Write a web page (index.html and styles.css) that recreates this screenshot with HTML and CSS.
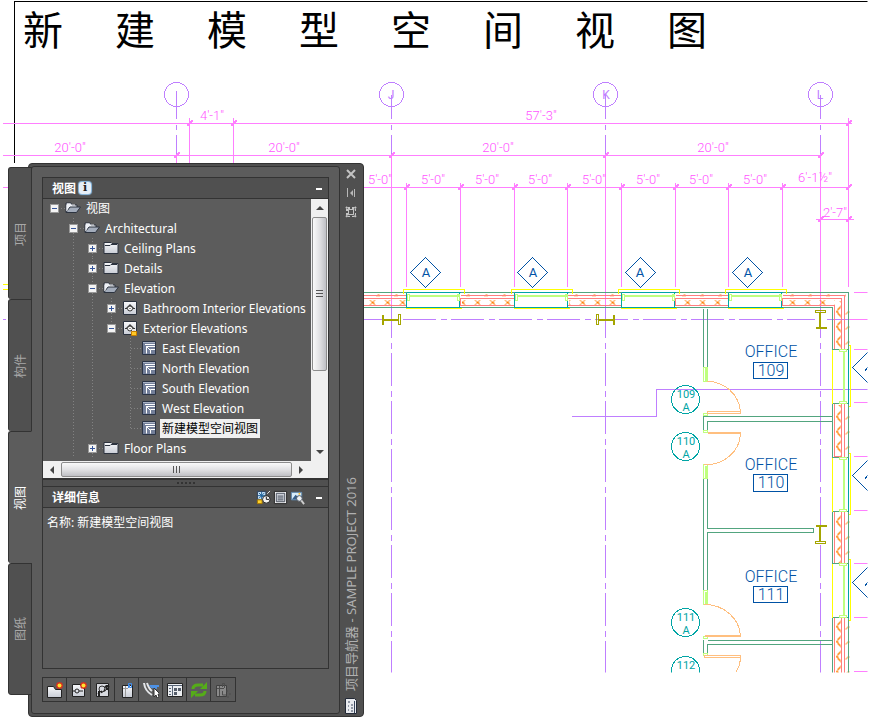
FILE: index.html
```html
<!DOCTYPE html>
<html lang="zh-CN">
<head>
    <meta charset="UTF-8">
    <meta name="viewport" content="width=device-width, initial-scale=1.0">
    <title>项目导航器 - SAMPLE PROJECT 2016</title>
    <link rel="stylesheet" href="styles.css">
</head>
<body>
    <div class="workspace">
        <!-- Floor plan, one unit = one pixel -->
        <svg class="drawing" aria-label="Floor plan">
            <defs>
                <clipPath id="sheet"><rect x="0" y="0" width="867" height="672"/></clipPath>
                <g id="tick"><path d="M-3 3L3 -3M-3 2L2 -3M-2 3L3 -2M-3 1H0V3"/></g>
                <g id="window">
                    <path class="yellow" d="M-3 1V-3H58V1M-1 16H55"/>
                    <path class="teal" d="M0 0H54M0 15H54M0 0V15M53 0V15"/>
                    <path class="lime" d="M2 3H52M2 4H52M1 2H3V8H1ZM51 2H53V8H51Z"/>
                </g>
                <g id="side-window">
                    <path class="yellow" d="M0 0V54M16 -4H18V57H16"/>
                    <path class="green" d="M0 0H16M0 54H16"/>
                    <path class="teal" d="M16 0V54"/>
                    <path class="lime" d="M11 2V52M12 2V52M7 0H14V2H7ZM7 52H14V54H7Z"/>
                </g>
                <g id="mark"><path class="blue" d="M0 -15L15 0L0 15L-15 0Z"/></g>
                <pattern id="batt" x="365" y="299" width="15" height="6" patternUnits="userSpaceOnUse">
                    <path class="orange" d="M4 6L10 0M10 6L4 0M6 3H9"/>
                </pattern>
                <pattern id="brick" x="368" y="293" width="18" height="3" patternUnits="userSpaceOnUse">
                    <path class="orange" d="M8 3L11 0"/>
                </pattern>
                <pattern id="side-batt" x="835" y="304" width="14" height="15" patternUnits="userSpaceOnUse">
                    <path class="orange" d="M6 1L1 7L6 13M0 7H3M10 10L13 7"/>
                </pattern>
            </defs>

            <g clip-path="url(#sheet)" transform="translate(0.5 0.5)">
                <path class="black" d="M14 162V1H880"/>

                <!-- Dimension chains -->
                <g class="pink">
                    <path d="M2 123H851M2 155H820M2 187H8M363 187H848M815 219H853"/>
                    <path d="M189 117V163M233 117V163M848 117V286M176 155V163"/>
                    <path d="M391 155V316M605 155V316M820 155V310"/>
                    <path d="M406 182V286M460 182V286M514 182V286M567 182V286M621 182V286M675 182V286M728 182V286M782 182V286"/>
                    <path d="M853 292H867M848 319H867M853 349H867M853 402H867M853 456H867M853 510H867M853 563H867M853 617H867M853 671H867"/>
                    <use href="#tick" x="189" y="123"/><use href="#tick" x="233" y="123"/><use href="#tick" x="848" y="123"/>
                    <use href="#tick" x="176" y="155"/><use href="#tick" x="391" y="155"/><use href="#tick" x="605" y="155"/><use href="#tick" x="820" y="155"/>
                    <use href="#tick" x="406" y="187"/><use href="#tick" x="460" y="187"/><use href="#tick" x="514" y="187"/><use href="#tick" x="567" y="187"/>
                    <use href="#tick" x="621" y="187"/><use href="#tick" x="675" y="187"/><use href="#tick" x="728" y="187"/><use href="#tick" x="782" y="187"/><use href="#tick" x="848" y="187"/>
                    <use href="#tick" x="820" y="219"/><use href="#tick" x="848" y="219"/>
                </g>
                <path class="yellow" d="M2 284H8M2 289H8"/>

                <!-- Column grid -->
                <g class="violet">
                    <circle cx="176" cy="94" r="12"/><circle cx="391" cy="94" r="12"/><circle cx="605" cy="94" r="12"/><circle cx="820" cy="94" r="12"/>
                    <path d="M176 90V118M176 124V129M176 134V153M391 94V118M391 124V129M391 134V153M605 94V118M605 124V129M605 134V153M820 94V118M820 124V129M820 134V153"/>
                    <path class="dashdot" d="M391 304V672M605 304V672M820 304V672M354 319H814M826 319H848"/>
                    <path d="M2 319H5M571 416H656V389H867"/>
                </g>

                <!-- North wall -->
                <g class="hatch">
                    <path d="M364 299H406V305H364ZM461 299H514V305H461ZM568 299H621V305H568ZM676 299H728V305H676ZM783 299H834V305H783Z"/>
                    <path d="M364 293H406V296H364ZM461 293H514V296H461ZM568 293H621V296H568ZM676 293H728V296H676ZM783 293H845V296H783Z"/>
                    <path d="M835 300H849V349H835ZM835 404H849V457H835ZM835 512H849V563H835ZM835 618H849V672H835Z"/>
                </g>
                <path class="green" d="M363 292H406M460 292H514M567 292H621M675 292H728M782 292H848V349M363 307H406M460 307H514M567 307H621M675 307H728M782 307H832V349"/>
                <path class="salmon" d="M363 295H406M363 298H406M363 305H406V298M460 295H514M514 298H460V305H514M567 295H621M621 298H567V305H621M675 295H728M728 298H675V305H728M782 295H844V349M841 349V298H782V305H834V349"/>
                <use href="#window" x="406" y="292"/><use href="#window" x="514" y="292"/><use href="#window" x="621" y="292"/><use href="#window" x="728" y="292"/>

                <!-- East wall -->
                <path class="green" d="M832 403V457M848 403V457M832 511V563M848 511V563M832 617V672M848 617V672"/>
                <path class="salmon" d="M834 403V456H841V403M844 403V457M834 511V563H841V511M844 511V563M834 617V672M841 617V672M844 617V672"/>
                <use href="#side-window" x="832" y="349"/><use href="#side-window" x="832" y="457"/><use href="#side-window" x="832" y="563"/>

                <!-- Steel columns -->
                <g class="olive">
                    <path d="M382 314V324M383 314V324M383 319H398M383 320H398M398 314H400V324H398Z"/>
                    <path d="M596 314H598V324H596ZM598 319H613M598 320H613M613 314V324M614 314V324"/>
                    <path d="M815 310H825V312H815ZM819 312V327M820 312V327M815 327H826M815 328H826"/>
                    <path d="M815 525H826M815 526H826M819 526V541M820 526V541M815 541H825V543H815Z"/>
                </g>

                <!-- Office partitions -->
                <path class="green" d="M703 308V367M707 308V367M832 416H703V430M832 421H707V430M703 478V590M707 478V528H813V532H707V590M703 639V653M707 653V644H832M707 640H832"/>
                <path class="lime" d="M703 367H707V381H703ZM705 367V380M706 367V380M703 413H707V415H703ZM703 430H707V432H703ZM703 464H707V478H703ZM705 465V477M706 465V477M703 590H707V604H703ZM705 591V603M706 591V603M703 636H707V638H703ZM703 653H707V655H703Z"/>
                <path class="peach" d="M707 381A33 33 0 0 1 740 411M707 411H740V413H707ZM707 432H740M707 433H740M740 433A34 32 0 0 1 704 464M704 604A36 33 0 0 1 740 635M704 635H740M704 636H740M704 655H740V657H704ZM740 658Q739 667 735 672"/>
                <path class="blue" d="M753 362H787V378H753ZM753 474H787V491H753ZM753 586H787V602H753Z"/>

                <!-- Window and door tags -->
                <use href="#mark" x="425" y="272"/><use href="#mark" x="532" y="272"/><use href="#mark" x="640" y="272"/><use href="#mark" x="747" y="272"/>
                <use href="#mark" x="867" y="367"/><use href="#mark" x="867" y="475"/><use href="#mark" x="867" y="582"/>
                <path class="blue" d="M864 371L867 367M864 479L867 475M864 586L867 582"/>
                <g class="teal">
                    <circle cx="685" cy="399" r="14"/><circle cx="685" cy="446" r="14"/><circle cx="685" cy="622" r="14"/><circle cx="685" cy="670" r="14"/>
                </g>
            </g>

            <g class="dim-text">
                <text x="212" y="120">4'-1"</text>
                <text x="541" y="120">57'-3"</text>
                <text x="70" y="152">20'-0"</text>
                <text x="284" y="152">20'-0"</text>
                <text x="498" y="152">20'-0"</text>
                <text x="713" y="152">20'-0"</text>
                <text x="380" y="184">5'-0"</text>
                <text x="433" y="184">5'-0"</text>
                <text x="487" y="184">5'-0"</text>
                <text x="540" y="184">5'-0"</text>
                <text x="594" y="184">5'-0"</text>
                <text x="648" y="184">5'-0"</text>
                <text x="701" y="184">5'-0"</text>
                <text x="755" y="184">5'-0"</text>
                <text x="815" y="182">6'-1½"</text>
                <text x="835" y="217">2'-7"</text>
            </g>
            <g class="grid-text">
                <text x="391" y="99">J</text>
                <text x="606" y="99">K</text>
                <text x="820" y="99">L</text>
            </g>
            <g class="mark-text">
                <text x="426" y="277">A</text>
                <text x="533" y="277">A</text>
                <text x="640" y="277">A</text>
                <text x="748" y="277">A</text>
            </g>
            <g class="room-text">
                <text x="771" y="357">OFFICE</text><text x="771" y="376">109</text>
                <text x="771" y="470">OFFICE</text><text x="771" y="488">110</text>
                <text x="771" y="582">OFFICE</text><text x="771" y="600">111</text>
            </g>
            <g class="door-text" clip-path="url(#sheet)">
                <text x="686" y="398">109</text><text x="686" y="411">A</text>
                <text x="686" y="445">110</text><text x="686" y="458">A</text>
                <text x="686" y="621">111</text><text x="686" y="634">A</text>
                <text x="686" y="669">112</text>
            </g>
        </svg>

        <h1 class="sheet-title">
            <span>新</span><span>建</span><span>模</span><span>型</span><span>空</span><span>间</span><span>视</span><span>图</span>
        </h1>

        <!-- Icon sprites -->
        <svg class="sprites" aria-hidden="true">
            <defs>
                <linearGradient id="sheen" x1="0" y1="0" x2="0" y2="1"><stop offset="0" stop-color="#f8f9fb"/><stop offset="1" stop-color="#c9cdd6"/></linearGradient>
            </defs>
            <symbol id="i-folder" viewBox="0 0 16 16">
                <path fill="url(#sheen)" stroke="#2c333f" d="M1 2.500h7l1 1h6v10H1z"/><path stroke="#2c333f" d="M2 5.500h5l1-1h6"/>
            </symbol>
            <symbol id="i-folder-open" viewBox="0 0 16 16">
                <path fill="#eef1f6" stroke="#2c333f" d="M1 12V3h5l1 2h5v3"/><path fill="#a3acbb" stroke="#2c333f" d="M1 12.500L5 7h10.500l-4 5.500z"/><path stroke="#eef1f6" d="M2 4h3.500M2 11V5h8"/>
            </symbol>
            <symbol id="i-category" viewBox="0 0 16 16">
                <path fill="url(#sheen)" stroke="#2c333f" d="M1.500 1.500h13v13h-13z"/><path fill="#444" d="M4 8l4-4 4 4z"/><circle cx="8" cy="8.500" r="2.500" fill="#fff" stroke="#333"/><path stroke="#333" d="M3 8.500h2M11 8.500h2M8 8v1"/>
            </symbol>
            <symbol id="i-view" viewBox="0 0 16 16">
                <path fill="#74809a" stroke="#2b3445" d="M1.500 1.500h13v13h-13z"/><path stroke="#aab3c4" d="M2 2.500h12"/><path fill="none" stroke="#fff" d="M5.500 13.500V6.500h8.500M4 4.500h10M9.500 13.500v-4h4.500M5 6l4 4"/>
            </symbol>
            <symbol id="i-lock" viewBox="0 0 8 8">
                <path fill="none" stroke="#eee" d="M2.500 4V1.500h3V4"/><path fill="#ffc928" stroke="#c98000" d="M1.500 3.500h5v4h-5z"/>
            </symbol>
        </svg>

        <div class="palette">
            <nav class="tabs">
                <button class="tab">项目</button>
                <button class="tab">构件</button>
                <button class="tab active">视图</button>
                <button class="tab">图纸</button>
            </nav>

            <div class="frame">
                <div class="content">
                    <section class="panel">
                        <header class="panel-header">
                            <h2>视图</h2>
                            <span class="info">i</span>
                            <button class="collapse" aria-label="Collapse"></button>
                        </header>
                        <div class="tree-area">
                            <ul class="tree">
                                <li>
                                    <div class="row"><button class="toggle" aria-label="Collapse"></button><svg class="icon"><use href="#i-folder-open"/></svg><span>视图</span></div>
                                    <ul>
                                        <li>
                                            <div class="row"><button class="toggle" aria-label="Collapse"></button><svg class="icon"><use href="#i-folder-open"/></svg><span>Architectural</span></div>
                                            <ul>
                                                <li><div class="row"><button class="toggle plus" aria-label="Expand"></button><svg class="icon"><use href="#i-folder"/></svg><span>Ceiling Plans</span></div></li>
                                                <li><div class="row"><button class="toggle plus" aria-label="Expand"></button><svg class="icon"><use href="#i-folder"/></svg><span>Details</span></div></li>
                                                <li>
                                                    <div class="row"><button class="toggle" aria-label="Collapse"></button><svg class="icon"><use href="#i-folder-open"/></svg><span>Elevation</span></div>
                                                    <ul>
                                                        <li><div class="row"><button class="toggle plus" aria-label="Expand"></button><svg class="icon"><use href="#i-category"/></svg><span>Bathroom Interior Elevations</span></div></li>
                                                        <li class="last">
                                                            <div class="row"><button class="toggle" aria-label="Collapse"></button><svg class="icon"><use href="#i-category"/><use href="#i-lock" x="8" y="8" width="8" height="8"/></svg><span>Exterior Elevations</span></div>
                                                            <ul>
                                                                <li><div class="row leaf"><svg class="icon"><use href="#i-view"/></svg><span>East Elevation</span></div></li>
                                                                <li><div class="row leaf"><svg class="icon"><use href="#i-view"/></svg><span>North Elevation</span></div></li>
                                                                <li><div class="row leaf"><svg class="icon"><use href="#i-view"/></svg><span>South Elevation</span></div></li>
                                                                <li><div class="row leaf"><svg class="icon"><use href="#i-view"/></svg><span>West Elevation</span></div></li>
                                                                <li class="last"><div class="row leaf"><svg class="icon"><use href="#i-view"/></svg><span class="selected">新建模型空间视图</span></div></li>
                                                            </ul>
                                                        </li>
                                                    </ul>
                                                </li>
                                                <li><div class="row"><button class="toggle plus" aria-label="Expand"></button><svg class="icon"><use href="#i-folder"/></svg><span>Floor Plans</span></div></li>
                                            </ul>
                                        </li>
                                    </ul>
                                </li>
                            </ul>
                            <div class="scroll-v">
                                <button class="arrow up" aria-label="Scroll up"></button>
                                <div class="thumb"></div>
                                <button class="arrow down" aria-label="Scroll down"></button>
                            </div>
                            <div class="scroll-h">
                                <button class="arrow left" aria-label="Scroll left"></button>
                                <div class="thumb"></div>
                                <button class="arrow right" aria-label="Scroll right"></button>
                            </div>
                        </div>
                        <div class="splitter"></div>
                        <header class="panel-header">
                            <h2>详细信息</h2>
                            <div class="header-tools">
                                <button aria-label="Preview"><svg viewBox="0 0 16 16"><path fill="#c5dff5" stroke="#273d59" d="M1.500 1.500h9v9h-9z"/><path stroke="#1c6097" d="M6 2v8M2 6h8M3 3l6 6M9 3L3 9"/><path fill="#ffd42e" stroke="#a87800" d="M1.500 10.500h5v4h-5z"/><circle cx="11" cy="10" r="4" fill="#f4f4f4" stroke="#222"/><path fill="none" stroke="#111" d="M11 7v3h3"/><path stroke="#eee" d="M12 4l3-3"/></svg></button>
                                <button aria-label="Details"><svg viewBox="0 0 16 16"><path fill="#f2f3f5" stroke="#222" d="M1.500 1.500h13v13h-13z"/><path fill="#ccd0d8" stroke="#444c59" d="M3.500 3.500h9v9h-9zM5 6.500h6M5 8.500h6M5 10.500h6"/></svg></button>
                                <button aria-label="Find preview"><svg viewBox="0 0 16 16"><path fill="#d7ecfb" stroke="#5e87ae" d="M1.500 2.500h11v8h-11z"/><path fill="#375f8a" d="M2 10l4-5 3 3 2-1 2 3z"/><circle cx="10" cy="4" r="1" fill="#ffbd24"/><circle cx="10" cy="9" r="3" fill="#eef3f8" stroke="#49525e"/><path stroke="#ccc" stroke-width="2" d="M12 11l3 4"/></svg></button>
                            </div>
                            <button class="collapse" aria-label="Collapse"></button>
                        </header>
                        <div class="details">名称: 新建模型空间视图</div>
                    </section>

                    <div class="toolbar">
                        <button aria-label="New category"><svg viewBox="0 0 16 16"><path fill="url(#sheen)" stroke="#222" d="M.5 4.500h6l2 3h6v8H.5z"/><g id="spark"><path stroke="#d7311d" stroke-width="2" d="M12.500 0v7M9 3.500h7M10 1l5 5M15 1l-5 5"/><circle cx="12.500" cy="3.500" r="2" fill="#ffe22e"/></g></svg></button>
                        <button aria-label="New view drawing"><svg viewBox="0 0 16 16"><path fill="url(#sheen)" stroke="#222" d="M1.500 2.500h12v12h-12z"/><circle cx="6" cy="9" r="2" fill="none" stroke="#222"/><path stroke="#222" d="M8 9h4M2 9h2"/><use href="#spark"/></svg></button>
                        <button aria-label="Repath"><svg viewBox="0 0 16 16"><path fill="#d8dae0" stroke="#222" d="M1.500 1.500h12v13h-12z"/><circle cx="7" cy="7" r="3" fill="none" stroke="#333"/><path stroke="#222" stroke-width="2" stroke-dasharray="2 1" d="M3 12l5-3M4 14v-6M9 9l5-5M10 4l4 4M12 3v6"/></svg></button>
                        <button aria-label="External reference"><svg viewBox="0 0 16 16"><path fill="url(#sheen)" stroke="#222" d="M3.500 3.500h10v12h-10z"/><path stroke="#999" d="M4 6.500h5M6.500 4v11"/><path fill="none" stroke="#3d8bea" d="M9.500 6V1.500h3v4h-2V3"/></svg></button>
                        <button aria-label="Select sheet"><svg viewBox="0 0 16 16"><path fill="none" stroke="#e4e6e9" stroke-width="2" d="M1 1q1 8 8 12M4 1q2 6 5 8"/><path fill="#4d91e5" d="M6 3h10v2h-2v2l-6-1z"/><path fill="#fff" stroke="#333" d="M11 6v9l2-2 1 3 2-1-1-3h2z"/></svg></button>
                        <button aria-label="Layer manager"><svg viewBox="0 0 16 16"><path fill="#eceef1" stroke="#222" d="M.5 1.500h15v13H.5z"/><path stroke="#596577" d="M1 3.500h14M2 6.500h2M2 9.500h2M2 12.500h2M5.500 4v10"/><path fill="#555d6a" d="M7 6h3v3H7zM11 6h3v3h-3zM7 10h3v3H7z"/></svg></button>
                        <button aria-label="Refresh"><svg viewBox="0 0 16 16"><path fill="none" stroke="#55ac18" stroke-width="3" d="M2 7q0-4 5-4h5M14 9q0 4-5 4H4"/><path fill="#55ac18" d="M16 0v7H9zM0 16V9h7z"/></svg></button>
                        <button aria-label="Delete"><svg viewBox="0 0 16 16"><path fill="#8a8a8a" stroke="#404040" d="M1.500 3.500h10v11h-10z"/><path fill="none" stroke="#4d4d4d" d="M2 6.500h7M4.500 4v10M7.500 5V1.500h2V6M7.500 9v4h4M11 9h2M14 12h2M12 15h2"/></svg></button>
                    </div>
                </div>

                <aside class="side">
                    <button aria-label="Close"><svg viewBox="0 0 12 12"><path stroke="#c4c4c4" stroke-width="2" d="M2 2l8 8M10 2l-8 8"/></svg></button>
                    <button aria-label="Auto-hide"><svg viewBox="0 0 12 12"><path fill="#b8b8b8" d="M2 1h1v9H2zM5 6l3-3v6zM9 2h1v8H9z"/></svg></button>
                    <button aria-label="Properties"><svg viewBox="0 0 12 12"><path stroke="#c4c4c4" stroke-width="2" d="M1 1l10 10M11 1L1 11M4 1v10M8 1v10M1 4h10M1 8h10" stroke-dasharray="2 1"/><path fill="#505050" stroke="#c4c4c4" d="M3.500 3.500h5v5h-5z"/></svg></button>
                    <span class="side-title">项目导航器 - SAMPLE PROJECT 2016</span>
                    <svg class="app-icon" viewBox="0 0 12 16"><path fill="#e8eaee" stroke="#222936" d="M.5.5h9l2 2v13H.5z"/><path stroke="#38445a" d="M3 4h2M3 8h1M3 12h1M6 7h2M6 10h2M6 13h2M9.500 3v12"/></svg>
                </aside>
            </div>
        </div>
    </div>
</body>
</html>
```

FILE: styles.css
```css
* {
    box-sizing: border-box;
}
body {
    margin: 0;
    background-color: #fff;
    color: #fff;
    font-family: "Noto Sans", "Noto Sans CJK SC", sans-serif;
    font-size: 12px;
}
button {
    padding: 0;
    border: 0;
    background: none;
    color: inherit;
    font: inherit;
}
.workspace {
    position: relative;
    min-height: 100vh;
    overflow: hidden;
}

/* Drawing */
.drawing {
    display: block;
    width: 100%;
    height: 723px;
}
.drawing path, .drawing circle {
    fill: none;
    shape-rendering: crispEdges;
}
.drawing .hatch path {
    stroke: none;
}
.drawing .hatch path:nth-child(1) { fill: url(#batt); }
.drawing .hatch path:nth-child(2) { fill: url(#brick); }
.drawing .hatch path:nth-child(3) { fill: url(#side-batt); }
.black { stroke: #000; }
.pink { stroke: #ff7fff; }
.violet { stroke: #bf7fff; }
.yellow { stroke: #ffff00; }
.green { stroke: #52a57f; }
.teal { stroke: #00a5a5; }
.lime { stroke: #bfff7f; }
.salmon { stroke: #ff7f7f; }
.orange { stroke: #ff7f00; }
.peach { stroke: #ffbf7f; }
.olive { stroke: #a5a500; }
.blue { stroke: #0052a5; }
.dashdot {
    stroke-dasharray: 33 5 6 4;
}
.drawing text {
    font-family: Roboto, "Liberation Sans", sans-serif;
    font-weight: 300;
    text-anchor: middle;
}
.dim-text {
    fill: #ff55ff;
    font-size: 13px;
}
.grid-text {
    fill: #bf7fff;
    font-size: 12px;
}
.mark-text {
    fill: #0052a5;
    font-size: 13px;
}
.room-text {
    fill: #0052a5;
    font-size: 16px;
}
.door-text {
    fill: #00a5a5;
    font-size: 11px;
}
.drawing .mark-text text, .drawing .door-text text, .drawing .grid-text text {
    font-weight: 400;
}
.sheet-title {
    position: absolute;
    left: 23px;
    top: 0;
    display: flex;
    gap: 52px;
    margin: 0;
    color: #000;
    font-family: "Noto Sans CJK SC", sans-serif;
    font-size: 40px;
    font-weight: 400;
    line-height: 57px;
}
.sprites {
    position: absolute;
    width: 0;
    height: 0;
}

/* Palette window */
.palette {
    position: absolute;
    left: 8px;
    top: 163px;
    display: flex;
    align-items: flex-start;
}
.tabs {
    position: relative;
    z-index: 1;
    display: flex;
    flex-direction: column;
    width: 24px;
    margin-top: 4px;
    margin-right: -4px;
}
/* tabs are rotated half a turn, so their sides are swapped */
.tab {
    height: 132px;
    border: 1px solid #333;
    border-top: 0;
    border-radius: 0 3px 3px 0;
    background-color: #505050;
    color: #a8a8a8;
    writing-mode: vertical-rl;
    text-orientation: sideways;
    transform: rotate(180deg);
}
.tab:last-child {
    border-top: 1px solid #333;
}
.tab.active {
    border-left-color: #5c5c5c;
    background-color: #5c5c5c;
    color: #fff;
}
.frame {
    display: flex;
    width: 336px;
    padding: 2px;
    border: 1px solid #333;
    border-radius: 4px;
    background-color: #505050;
}
.content {
    flex: 1;
    padding: 10px 10px 11px;
    border: 1px solid #333;
    border-radius: 3px;
    background-color: #5c5c5c;
}
.panel {
    border: 1px solid #333;
}
.panel-header {
    display: flex;
    align-items: center;
    height: 21px;
    padding: 0 4px 0 9px;
    border-bottom: 1px solid #333;
    background-color: #505050;
}
.panel-header h2 {
    margin: 0;
    font-size: 12px;
    font-weight: bold;
}
.info {
    width: 12px;
    height: 12px;
    margin-left: 3px;
    border-radius: 3px;
    background-color: #e6eff8;
    box-shadow: 0 0 1px 1px #8fc0e8;
    color: #222;
    font: bold 11px/12px "DejaVu Serif", serif;
    text-align: center;
}
.collapse {
    width: 10px;
    height: 16px;
    margin-left: auto;
    background: linear-gradient(#fff, #fff) 2px 8px / 6px 2px no-repeat;
}
.header-tools {
    display: flex;
    gap: 2px;
    margin-left: auto;
}
.header-tools + .collapse {
    margin-left: 9px;
}
.header-tools button, .header-tools svg {
    display: block;
    width: 15px;
    height: 15px;
}
.tree-area {
    display: grid;
    grid-template-columns: 1fr 17px;
    grid-template-rows: 262px 17px;
    background-color: #f0f0f0;
}
.tree {
    overflow: hidden;
    margin: 0;
    padding-left: 7px;
    background-color: #5c5c5c;
    font-size: 12px;
}
.tree > li {
    margin-top: -1px;
}
.tree ul {
    margin: 0;
    padding-left: 19px;
}
.tree li {
    list-style: none;
}
.tree li li {
    background: repeating-linear-gradient(#828282 0 1px, transparent 1px 3px) 4px 0 / 1px 100% no-repeat;
}
.tree li.last {
    background-size: 1px 10px;
}
.row {
    display: flex;
    align-items: center;
    height: 20px;
    background: repeating-linear-gradient(90deg, #828282 0 1px, transparent 1px 3px) 5px 10px / 12px 1px no-repeat;
    white-space: nowrap;
}
.row.leaf {
    padding-left: 15px;
}
.row .icon {
    flex: none;
    width: 16px;
    height: 16px;
    margin-right: 3px;
}
.row span {
    padding: 0 2px;
    line-height: 19px;
}
.row .selected {
    background-color: #f0f0f0;
    color: #000;
}
.icon {
    fill: none;
}
.toggle {
    flex: none;
    width: 9px;
    height: 9px;
    margin-right: 6px;
    border: 1px solid #999;
    background: linear-gradient(#34549a, #34549a) 1px 3px / 5px 1px no-repeat #f4f4f4;
}
.toggle.plus {
    background: linear-gradient(#34549a, #34549a) 1px 3px / 5px 1px no-repeat, linear-gradient(#34549a, #34549a) 3px 1px / 1px 5px no-repeat #f4f4f4;
}
.scroll-v {
    display: flex;
    flex-direction: column;
    padding: 0 1px;
}
.scroll-h {
    display: flex;
    padding: 1px 0;
}
.thumb {
    border: 1px solid #8c8c8c;
    border-radius: 2px;
}
.scroll-v .thumb {
    height: 154px;
    background: repeating-linear-gradient(#555 0 1px, transparent 1px 3px) center / 7px 8px no-repeat, linear-gradient(90deg, #fafafa, #e2e2e4 50%, #bfc0c5);
}
.scroll-h .thumb {
    width: 231px;
    background: repeating-linear-gradient(90deg, #555 0 1px, transparent 1px 3px) center / 8px 7px no-repeat, linear-gradient(#fafafa, #e2e2e4 50%, #bfc0c5);
}
.arrow {
    display: flex;
    align-items: center;
    justify-content: center;
    width: 18px;
    height: 15px;
}
.scroll-v .arrow {
    width: 15px;
    height: 18px;
}
.arrow::before {
    content: "";
    border: 4px solid transparent;
}
.arrow.up::before {
    border-top: 0;
    border-bottom-color: #444;
}
.arrow.down {
    margin-top: auto;
}
.arrow.down::before {
    border-bottom: 0;
    border-top-color: #444;
}
.arrow.left::before {
    border-left: 0;
    border-right-color: #444;
}
.arrow.right::before {
    border-right: 0;
    border-left-color: #444;
}
.splitter {
    height: 9px;
    border-top: 2px solid #333;
    border-bottom: 1px solid #333;
    background: repeating-linear-gradient(90deg, #333 0 2px, transparent 2px 4px) center / 18px 2px no-repeat #505050;
}
.details {
    min-height: 160px;
    padding: 5px 4px;
    line-height: 19px;
}
.toolbar {
    display: flex;
    width: max-content;
    margin-top: 8px;
    border: 1px solid #333;
}
.toolbar button {
    width: 24px;
    height: 23px;
    padding: 3px 4px;
    border-right: 1px solid #333;
}
.toolbar button:last-child {
    border-right: 0;
}
.toolbar svg {
    display: block;
    width: 16px;
    height: 16px;
    fill: none;
}
.side {
    display: flex;
    flex-direction: column;
    align-items: center;
    gap: 7px;
    width: 21px;
    padding-top: 2px;
}
.side button, .side button svg {
    display: block;
    width: 12px;
    height: 12px;
}
.side-title {
    margin-top: auto;
    color: #b0b0b0;
    font-size: 13px;
    line-height: 16px;
    white-space: nowrap;
    writing-mode: vertical-rl;
    text-orientation: sideways;
    transform: rotate(180deg);
}
.app-icon {
    width: 12px;
    height: 16px;
}
```
